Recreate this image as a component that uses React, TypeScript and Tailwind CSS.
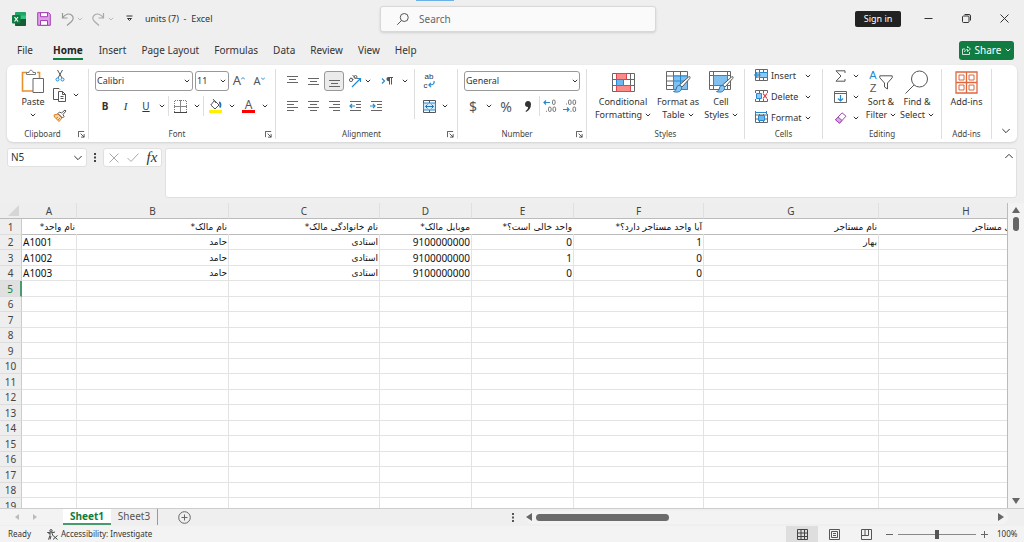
import React from "react"

type BtnProps = {
  label: string
  className?: string
  children?: React.ReactNode
}

const columns = [
  { name: "A", width: "w-[55px]" },
  { name: "B", width: "w-[152px]" },
  { name: "C", width: "w-[151px]" },
  { name: "D", width: "w-[92px]" },
  { name: "E", width: "w-[102px]" },
  { name: "F", width: "w-[130px]" },
  { name: "G", width: "w-[175px]" },
  { name: "H", width: "w-[175px]" },
]

const rows: string[][] = [
  [
    "نام واحد*",
    "نام مالک*",
    "نام خانوادگی مالک*",
    "موبایل مالک*",
    "واحد خالی است؟*",
    "آیا واحد مستاجر دارد؟*",
    "نام مستاجر",
    "نام خانوادگی مستاجر",
  ],
  ["A1001", "حامد", "استادی", "9100000000", "0", "1", "بهار", ""],
  ["A1002", "حامد", "استادی", "9100000000", "1", "0", "", ""],
  ["A1003", "حامد", "استادی", "9100000000", "0", "0", "", ""],
]

const rowNumbers = Array.from({ length: 19 }, (_, i) => i + 1)

const menuTabs = [
  "File",
  "Home",
  "Insert",
  "Page Layout",
  "Formulas",
  "Data",
  "Review",
  "View",
  "Help",
]

const Chevron = ({ className = "w-[6px] h-[6px]" }: { className?: string }) => (
  <svg viewBox="0 0 6 6" className={className} fill="none" stroke="currentColor">
    <path d="M.8 1.800L3 4l2.200-2.200" vectorEffect="non-scaling-stroke" />
  </svg>
)

const Btn = ({ label, className = "w-5", children }: BtnProps) => (
  <button
    aria-label={label}
    className={`h-5 shrink-0 flex items-center justify-center ${className}`}
  >
    {children}
  </button>
)

const Drop = ({ label }: { label: string }) => (
  <Btn label={label} className="w-3">
    <Chevron />
  </Btn>
)

const Sep = ({ className = "h-5" }: { className?: string }) => (
  <span className={`w-px shrink-0 bg-[#dedede] ${className}`} />
)

const Group = ({
  title,
  className,
  launcher,
  children,
}: {
  title: string
  className: string
  launcher?: boolean
  children: React.ReactNode
}) => (
  <section
    aria-label={title}
    className={`mt-1 mb-[3px] shrink-0 flex flex-col border-r border-[#dedede] ${className}`}
  >
    <div className="h-[60px]">{children}</div>
    <div className="flex h-[10px] items-center">
      <span className="flex-1 text-center text-[8px] leading-[10px] text-[#444]">
        {title}
      </span>
      {launcher && (
        <button aria-label={`${title} settings`} className="w-[10px]">
          <svg viewBox="0 0 8 8" className="size-[7px]" fill="none" stroke="#444">
            <path d="M.5 7V.5H7M3 3l4 4M7 3.5V7H3.5" />
          </svg>
        </button>
      )}
    </div>
  </section>
)

const Lines = ({ d, arrow }: { d: string; arrow?: string }) => (
  <svg viewBox="0 0 13 13" className="size-[13px]" fill="none">
    <path d={d} stroke="#666" />
    {arrow && <path d={arrow} stroke="#2589d0" strokeWidth="1.2" />}
  </svg>
)

const PasteIcon = () => (
  <svg viewBox="0 0 24 25" className="w-6 h-[25px]" fill="none">
    <path d="M6 3.500H1.500v18.500H12M16 3.500h2.500V9" stroke="#e8912d" strokeWidth="1.600" />
    <path d="M5.500 5.500v-2h2.500c0-3 4-3 4 0h2.500v2z" fill="#fff" stroke="#777" />
    <path d="M12 9.500h10.500v14H12z" fill="#fff" stroke="#666" />
  </svg>
)

const CutIcon = () => (
  <svg viewBox="0 0 10 13" className="w-[10px] h-[13px]" fill="none">
    <path d="M2.500 1l4.500 8M7.500 1L3 9" stroke="#555" />
    <circle cx="2.500" cy="10.500" r="1.500" stroke="#2589d0" />
    <circle cx="7.500" cy="10.500" r="1.500" stroke="#2589d0" />
  </svg>
)

const CopyIcon = () => (
  <svg viewBox="0 0 14 14" className="size-[14px]" fill="none" stroke="#555">
    <path d="M5 11.500H.5v-11H6L7 1.500" />
    <path d="M5.500 3.500h4l3 3v7h-7zM9.500 3.500v3h3M7.500 8.500h3M7.500 10.500h3" fill="#fff" />
  </svg>
)

const BrushIcon = () => (
  <svg viewBox="0 0 14 13" className="w-[14px] h-[13px]" fill="none">
    <path d="M1 6l4-1 4 4-3 3.500L1.500 8z" fill="#fbd8a8" stroke="#e07b1b" />
    <path d="M3 9.500l2-1.500M5 11l2-2" stroke="#e07b1b" />
    <path d="M5 4.500l1.500-1.500 2 1L12 1l1 1-3 3.500 1 2L9.500 9z" fill="#fff" stroke="#555" />
  </svg>
)

const BordersIcon = () => (
  <svg viewBox="0 0 13 13" className="size-[13px]" fill="none" stroke="#777">
    <path d="M.5 12V.5h12V12" strokeDasharray="1 1" />
    <path d="M6.500 0v13M0 6.500h13" stroke="#888" />
    <path d="M0 12.500h13" stroke="#444" />
  </svg>
)

const FillIcon = () => (
  <svg viewBox="0 0 13 14" className="w-[13px] h-[14px]" fill="none">
    <path d="M5.500 1.500L10 6 6 10 1.800 6zM4 0l3 4" stroke="#555" />
    <path d="M10 3.500c1.500 0 2 2 1 5" stroke="#1d6fb8" strokeWidth="1.800" />
    <path d="M0 11h13v3H0z" fill="#fff200" />
  </svg>
)

const FontColorIcon = () => (
  <span className="flex w-[13px] flex-col items-center text-[12px] leading-[11px] text-[#555]">
    A
    <span className="h-[3px] w-full bg-[#f00]" />
  </span>
)

const OrientationIcon = () => (
  <svg viewBox="0 0 14 14" className="size-[14px]" fill="none">
    <g stroke="#555" strokeWidth=".9">
      <circle cx="3" cy="6" r="1.600" />
      <path d="M3 3.500l2.500 2.500M4.500 1l4 4" />
      <circle cx="7.500" cy="3" r="1.500" />
    </g>
    <path d="M4 13l8.500-8.500M9 4.500h3.500V8" stroke="#2589d0" strokeWidth="1.200" />
  </svg>
)

const ParagraphIcon = () => (
  <svg viewBox="0 0 12 10" className="w-3 h-[10px]" fill="none">
    <path d="M1 2.500L3.500 5 1 7.500" stroke="#2589d0" strokeWidth="1.200" />
    <path d="M8.500 1.500v7M10.500 1.500v7M7.500 1.500H12" stroke="#555" />
    <path d="M8.500 1H7.500a2 2 0 000 4.200h1z" fill="#555" />
  </svg>
)

const WrapIcon = () => (
  <span className="flex flex-col font-['Liberation_Sans'] text-[8px] leading-[9px] text-[#333]">
    ab
    <span className="flex">
      c
      <svg viewBox="0 0 7 7" className="size-[7px]" fill="none" stroke="#2589d0" strokeWidth="1.200">
        <path d="M6 0c.6 3-1 4-5 4M3 1.800L.8 4 3 6.200" />
      </svg>
    </span>
  </span>
)

const MergeIcon = () => (
  <svg viewBox="0 0 13 13" className="size-[13px]" fill="none">
    <path d="M.5.5h12v12H.5zM6.500 0v3M6.500 10v3" stroke="#555" />
    <path d="M.5 3h12v7H.5z" fill="#d3e9fa" stroke="#2589d0" />
    <path d="M2.500 6.500h8M4.500 4.500l-2 2 2 2M8.500 4.500l2 2-2 2" stroke="#1d76ba" />
  </svg>
)

const DecimalIcon = ({ increase }: { increase?: boolean }) => (
  <svg viewBox="0 0 14 14" className="size-[14px]" fill="none">
    <g stroke="#666" strokeWidth=".9">
      {increase ? (
        <rect x="9.500" y="1" width="2.600" height="4.500" rx="1.300" />
      ) : (
        <>
          <rect x="5.500" y="1" width="2.600" height="4.500" rx="1.300" />
          <rect x="10" y="1" width="2.600" height="4.500" rx="1.300" />
          <path d="M3.500 4.500v1" />
        </>
      )}
      {increase && <rect x="5.500" y="8" width="2.600" height="4.500" rx="1.300" />}
      <rect x="10" y="8" width="2.600" height="4.500" rx="1.300" />
      <path d={increase ? "M3.500 11.800v1" : "M8 11.800v1"} />
    </g>
    <path
      d={increase ? "M7 3.500H1M3 1.500l-2 2 2 2" : "M0 10.500h6M4 8.500l2 2-2 2"}
      stroke="#2589d0"
      strokeWidth="1.200"
    />
  </svg>
)

const ConditionalIcon = () => (
  <svg viewBox="0 0 23 19" className="w-[23px] h-[19px]" fill="none">
    <path d="M.5.5h22v18H.5zM.5 6.500h22M.5 12.500h22M4.500.5v18M18.500.5v18" stroke="#666" />
    <path d="M4.500.5h10v6h-10zM4.500 12.500h14v6h-14z" fill="#f98b8b" stroke="#e0444b" />
    <path d="M4.500 6.500h7v6h-7z" fill="#6fb7ec" stroke="#2589d0" />
  </svg>
)

const TableStyleIcon = ({ single }: { single?: boolean }) => (
  <svg viewBox="0 0 25 22" className="w-[25px] h-[22px]" fill="none">
    <path
      d={
        single
          ? "M.5.5h21v18H.5zM4.500.5v18M18.500.5v18M.5 4.500h21M.5 14.500h21"
          : "M.5.5h21v18H.5zM7.500.5v18M14.500.5v18M.5 5h21M.5 10h21M.5 14.500h21"
      }
      stroke="#666"
    />
    {single ? (
      <path d="M4.500 4.500h14v10h-14z" fill="#80c0f0" stroke="#2589d0" />
    ) : (
      <path d="M7.500 5h14v13.500h-14zM14.500 5v13M7.500 10h14" fill="#80c0f0" stroke="#2589d0" />
    )}
    <path d="M22.500 6c1.500-1 2 0 1.200 1.500L16 16l-2.500-2z" fill="#fff" stroke="#555" />
    <path d="M13 14.500c2 0 3.500 2 2 4.500-1.500 2.500-5 2.500-7.500 1.500 2-.5 2.500-1.500 3-3.500.3-1.500 1-2.500 2.500-2.500z" fill="#8cc4f0" stroke="#1d76ba" />
  </svg>
)

const CellsIcon = ({ kind }: { kind: string }) => (
  <svg viewBox="0 0 14 13" className="w-[14px] h-[13px]" fill="none">
    <path d="M1.500.5h12v11h-12zM1.500 4h12M1.500 8h12M5.500.5v11M9.500.5v11" stroke="#666" />
    {kind === "Insert" && (
      <>
        <path d="M5.500 3.500h8v5h-8z" fill="#8cc8f5" stroke="#2589d0" />
        <path d="M6.500 6H.8M3 3.500L.8 6 3 8.500" stroke="#2589d0" strokeWidth="1.300" />
      </>
    )}
    {kind === "Delete" && (
      <>
        <path d="M0 3h14v6H0z" fill="#fff" />
        <path d="M2.500 3.500h5v5h-5z" fill="#8cc8f5" stroke="#2589d0" />
        <path d="M9 3.500l4 5M13 3.500l-4 5" stroke="#e0343c" strokeWidth="1.200" />
      </>
    )}
    {kind === "Format" && (
      <>
        <path d="M1 0h13v3H1z" fill="#fff" />
        <path d="M1.500 0v3M12.500 0v3M2 1.500h10" stroke="#2589d0" />
        <path d="M4.500 4.500h6v5h-6z" fill="#6fb7ec" stroke="#2589d0" />
      </>
    )}
  </svg>
)

const FillDownIcon = () => (
  <svg viewBox="0 0 13 12" className="w-[13px] h-3" fill="none">
    <path d="M.5.5h12v11H.5zM.5 2.500h12" stroke="#666" />
    <path d="M6.500 4v6M4 7.500L6.500 10 9 7.500" stroke="#2589d0" strokeWidth="1.200" />
  </svg>
)

const EraserIcon = () => (
  <svg viewBox="0 0 13 12" className="w-[13px] h-3" fill="none" stroke="#9b4bab">
    <path d="M8 .8l4 3.400-6.500 7-4-3.400z" fill="#fff" />
    <path d="M4 5l4 3.400-2.500 2.800-4-3.400z" fill="#dca6e4" />
  </svg>
)

const SortIcon = () => (
  <span className="flex items-center gap-[2px]">
    <span className="flex flex-col font-['Liberation_Sans'] text-[11px] leading-[13px] text-[#555]">
      <span className="text-[#2589d0]">A</span>
      <span>Z</span>
    </span>
    <svg viewBox="0 0 14 15" className="w-[14px] h-[15px]" fill="none" stroke="#555">
      <path d="M.8.8h12.400v2L8.500 8v6l-3-2V8L.8 2.800z" />
    </svg>
  </span>
)

const SearchIcon = ({ className }: { className: string }) => (
  <svg viewBox="0 0 24 24" className={className} fill="none" stroke="#555">
    <circle cx="14.500" cy="9" r="8" vectorEffect="non-scaling-stroke" />
    <path d="M9 15l-8.500 8.500" vectorEffect="non-scaling-stroke" />
  </svg>
)

const AddinsIcon = () => (
  <svg viewBox="0 0 23 23" className="size-[23px]" fill="none" stroke="#e0673c">
    <path d="M1 1h21v21H1zM11.500 1v21M1 11.500h21" strokeWidth="1.300" />
    <path d="M4 4h5v5H4zM14 4h5v5h-5zM4 14h5v5H4zM14 14h5v5h-5z" />
  </svg>
)

const BigBtn = ({
  top,
  bottom,
  className,
  children,
}: {
  top: string
  bottom?: string
  className: string
  children: React.ReactNode
}) => (
  <button
    className={`flex flex-col items-center whitespace-nowrap text-[9px] leading-[13px] ${className}`}
  >
    <span className="flex h-[26px] items-center">{children}</span>
    <span>{top}</span>
    {bottom && (
      <span className="flex items-center gap-[3px]">
        {bottom}
        <Chevron />
      </span>
    )}
  </button>
)

const TitleBar = () => (
  <header className="relative flex h-[37px] shrink-0 items-center pl-3">
    <div className="flex flex-1 items-center">
      <svg viewBox="0 0 14 14" className="size-[14px]">
        <path d="M4 0h9a1 1 0 011 1v12a1 1 0 01-1 1H4a1 1 0 01-1-1V1a1 1 0 011-1z" fill="#21a366" />
        <path d="M3 7h11v6a1 1 0 01-1 1H4a1 1 0 01-1-1z" fill="#185c37" />
        <path d="M8.500 3.500H14V7H8.500z" fill="#33c481" />
        <rect y="3" width="8.500" height="8.500" rx="1" fill="#107c41" />
        <path d="M2.500 5l3.500 4.500M6 5L2.500 9.500" stroke="#fff" strokeWidth="1.200" />
      </svg>
      <Btn label="Save" className="ml-2 w-5">
        <svg viewBox="0 0 14 14" className="size-[14px]" fill="#df9fe6" stroke="#a63db5">
          <path d="M.7.7h11l1.600 1.600v11H.7z" />
          <path d="M3.500.7h7v4h-7zM3.500 8.500h7v4.800h-7z" fill="#fff" />
        </svg>
      </Btn>
      <Btn label="Undo" className="ml-1 w-5">
        <svg viewBox="0 0 14 14" className="size-[14px]" fill="none" stroke="#999" strokeWidth="1.200">
          <path d="M1.500 1v5h5M1.500 6C4 2 8 1 10.500 3s2 4.500 0 6.500L6 13.500" />
        </svg>
      </Btn>
      <span className="-ml-1 text-[#bbb]"><Drop label="Undo history" /></span>
      <Btn label="Redo" className="ml-1 w-4">
        <svg viewBox="0 0 14 14" className="size-[14px]" fill="none" stroke="#aaa" strokeWidth="1.200">
          <path d="M12.500 1v5h-5M12.500 6C10 2 6 1 3.500 3s-2 4.500 0 6.500L8 13.500" />
        </svg>
      </Btn>
      <span className="-ml-px text-[#bbb]"><Drop label="Redo history" /></span>
      <Btn label="Customize toolbar" className="ml-1 w-4">
        <svg viewBox="0 0 7 7" className="size-[7px]" fill="none" stroke="#333">
          <path d="M.5 1h6M1.500 3.500l2 2 2-2z" />
        </svg>
      </Btn>
      <h1 className="ml-2 text-[9px] whitespace-pre text-[#333]">units (7)  -  Excel</h1>
    </div>
    <label className="mt-px flex h-[26px] w-[276px] items-center gap-2 rounded-[3px] border border-[#d8d8d8] bg-[#fafafa] px-4 shadow-sm">
      <SearchIcon className="size-3" />
      <input
        aria-label="Search"
        placeholder="Search"
        className="min-w-0 flex-1 pl-[2px] text-[10px] outline-none placeholder:text-[#666]"
      />
    </label>
    <span className="absolute top-0 left-[416px] h-px w-[38px] bg-[#6cb1e6]" />
    <div className="flex flex-1 items-center justify-end">
      <button className="h-4 w-[46px] rounded-[2px] bg-[#222] text-[9px] text-white">Sign in</button>
      <Btn label="Minimize" className="ml-2 w-[38px]">
        <svg viewBox="0 0 9 9" className="size-[9px]" stroke="#333"><path d="M.5 4.500h8" /></svg>
      </Btn>
      <Btn label="Restore" className="w-[38px]">
        <svg viewBox="0 0 9 9" className="size-[9px]" fill="none" stroke="#333">
          <rect x=".5" y="2" width="6.500" height="6.500" rx="1" />
          <path d="M2.500.5H7A1.500 1.500 0 018.500 2v4.500" />
        </svg>
      </Btn>
      <Btn label="Close" className="mr-px w-[38px]">
        <svg viewBox="0 0 9 9" className="size-[9px]" stroke="#333"><path d="M.5.5l8 8M8.500.5l-8 8" /></svg>
      </Btn>
    </div>
  </header>
)

const MenuBar = () => (
  <nav className="flex h-7 shrink-0 items-center gap-[15px] pr-[10px] pb-[2px] pl-[17px] text-[10px] text-[#333]">
    {menuTabs.map((tab) => (
      <a
        key={tab}
        href="#"
        className={
          tab === "Home"
            ? "mt-[2px] mr-px ml-[5px] border-b-2 border-[#107c41] font-bold leading-4 text-[#222]"
            : "leading-4"
        }
      >
        {tab}
      </a>
    ))}
    <button className="ml-auto flex h-[19px] w-[55px] items-center justify-center gap-1 rounded-[3px] bg-[#107c41] text-white">
      <svg viewBox="0 0 9 9" className="size-[9px]" fill="none" stroke="#fff">
        <path d="M3 3H.5v5.500h7V6M2.500 6C3 4 4 3.500 5.500 3.500V5.500L8.500 3 5.500.5V2" strokeWidth=".8" />
      </svg>
      Share
      <Chevron />
    </button>
  </nav>
)

const Ribbon = () => (
  <div className="mx-[7px] flex h-[77px] shrink-0 rounded-md bg-white text-[#333] shadow">
    <Group title="Clipboard" className="w-[82px]" launcher>
      <div className="flex">
        <button className="ml-3 flex w-7 flex-col items-center text-[9px] leading-[13px]">
          <PasteIcon />
          <span className="mt-px mb-1">Paste</span>
          <Chevron />
        </button>
        <div className="ml-[3px]">
          <Btn label="Cut" className="-mt-1 w-5"><CutIcon /></Btn>
          <div className="flex">
            <Btn label="Copy"><CopyIcon /></Btn>
            <Drop label="Copy options" />
          </div>
          <Btn label="Format painter"><BrushIcon /></Btn>
        </div>
      </div>
    </Group>

    <Group title="Font" className="w-[187px]" launcher>
      <div className="flex items-center pt-[2px] pl-[6px]">
        <label className="flex h-5 w-[98px] items-center rounded-[3px] border border-[#999] pr-[2px] pl-px">
          <select aria-label="Font name" className="h-full min-w-0 flex-1 appearance-none text-[9px] outline-none">
            <option>Calibri</option>
          </select>
          <Chevron />
        </label>
        <label className="ml-[2px] flex h-5 w-[34px] items-center rounded-[3px] border border-[#999] pr-[2px] pl-px">
          <select aria-label="Font size" className="h-full min-w-0 flex-1 appearance-none text-[9px] outline-none">
            <option>11</option>
          </select>
          <Chevron />
        </label>
        <Btn label="Increase font size">
          <span className="text-[13px] text-[#555]">A</span>
          <svg viewBox="0 0 4 8" className="h-2 w-1" fill="none" stroke="#2589d0"><path d="M0 2.500L2 .5l2 2" /></svg>
        </Btn>
        <Btn label="Decrease font size">
          <span className="text-[11px] text-[#555]">A</span>
          <svg viewBox="0 0 4 8" className="h-2 w-1" fill="none" stroke="#2589d0"><path d="M0 .5l2 2 2-2" /></svg>
        </Btn>
      </div>
      <div className="flex items-center pt-[5px] pl-[6px]">
        <Btn label="Bold" className="w-5 text-[10px] font-bold">B</Btn>
        <Btn label="Italic" className="w-[21px] font-['Liberation_Serif'] text-[11px] italic">I</Btn>
        <Btn label="Underline" className="w-5 text-[10px] underline">U</Btn>
        <Drop label="Underline options" />
        <Sep />
        <Btn label="Borders" className="w-[22px]"><BordersIcon /></Btn>
        <Drop label="Border options" />
        <Sep />
        <Btn label="Fill color" className="w-[22px]"><FillIcon /></Btn>
        <Drop label="Fill options" />
        <Btn label="Font color" className="w-[21px]"><FontColorIcon /></Btn>
        <Drop label="Font color options" />
      </div>
    </Group>

    <Group title="Alignment" className="w-[182px]" launcher>
      <div className="flex">
        <div className="w-[138px] pl-[6px]">
          <div className="flex items-center pt-[2px]">
            <Btn label="Top align" className="w-[21px]"><Lines d="M1 1.500h11M3 4.500h7M1 7.500h11" /></Btn>
            <Btn label="Middle align" className="w-[21px]"><Lines d="M1 3.500h11M3 6.500h7M1 9.500h11" /></Btn>
            <Btn label="Bottom align" className="w-5 rounded-[3px] border border-[#999] bg-[#ebebeb]">
              <Lines d="M1 5.500h11M3 8.500h7M1 11.500h11" />
            </Btn>
            <Btn label="Orientation" className="w-[21px]"><OrientationIcon /></Btn>
            <Chevron />
            <Btn label="Text direction" className="ml-1 w-6"><ParagraphIcon /></Btn>
            <Drop label="Direction options" />
          </div>
          <div className="flex items-center pt-[5px]">
            <Btn label="Align left" className="w-[21px]"><Lines d="M1 1.500h11M1 4.500h7M1 7.500h11M1 10.500h7" /></Btn>
            <Btn label="Center" className="w-[21px]"><Lines d="M1 1.500h11M3 4.500h7M1 7.500h11M3 10.500h7" /></Btn>
            <Btn label="Align right" className="w-[21px]"><Lines d="M1 1.500h11M5 4.500h7M1 7.500h11M5 10.500h7" /></Btn>
            <Btn label="Decrease indent" className="w-[21px]">
              <Lines d="M1 1.500h11M7 4.500h5M7 7.500h5M1 10.500h11" arrow="M6 6H.8M3 4L1 6l2 2" />
            </Btn>
            <Btn label="Increase indent" className="w-[21px]">
              <Lines d="M1 1.500h11M7 4.500h5M7 7.500h5M1 10.500h11" arrow="M0 6h5.200M3 4l2 2-2 2" />
            </Btn>
          </div>
        </div>
        <Sep className="h-[50px]" />
        <div className="pt-[2px] pl-1">
          <Btn label="Wrap text"><WrapIcon /></Btn>
          <div className="flex pt-[5px]">
            <Btn label="Merge and center"><MergeIcon /></Btn>
            <Drop label="Merge options" />
          </div>
        </div>
      </div>
    </Group>

    <Group title="Number" className="w-[129px]" launcher>
      <div className="px-[6px] pt-[2px]">
        <label className="flex h-5 items-center rounded-[3px] border border-[#999] pr-px pl-px">
          <select aria-label="Number format" className="h-full min-w-0 flex-1 appearance-none text-[9px] outline-none">
            <option>General</option>
          </select>
          <Chevron />
        </label>
      </div>
      <div className="flex items-center pt-[5px] pl-[5px]">
        <Btn label="Currency" className="w-5 text-[14px] text-[#555]">$</Btn>
        <Drop label="Currency options" />
        <Btn label="Percent" className="w-[22px] text-[14px] text-[#555]">%</Btn>
        <Btn label="Comma style" className="w-[22px]">
          <svg viewBox="0 0 6 11" className="w-[6px] h-[11px]" fill="#333">
            <path d="M3 0c2 0 3 1.300 3 3.200C6 7 4 9.600 1 11L.5 10c1.700-1 2.500-2.300 2.600-4C1.300 6.200 0 5 0 3.200 0 1.300 1.200 0 3 0z" />
          </svg>
        </Btn>
        <Sep />
        <Btn label="Increase decimal"><DecimalIcon increase /></Btn>
        <Btn label="Decrease decimal"><DecimalIcon /></Btn>
      </div>
    </Group>

    <Group title="Styles" className="w-[158px]">
      <div className="flex pl-1">
        <BigBtn top="Conditional" bottom="Formatting" className="w-[64px]"><ConditionalIcon /></BigBtn>
        <BigBtn top="Format as" bottom="Table" className="w-[46px]"><TableStyleIcon /></BigBtn>
        <BigBtn top="Cell" bottom="Styles" className="w-[40px]"><TableStyleIcon single /></BigBtn>
      </div>
    </Group>

    <Group title="Cells" className="w-[78px]">
      <div className="-mt-1 pl-[9px]">
        {["Insert", "Delete", "Format"].map((kind) => (
          <button key={kind} className="flex h-[21px] items-center gap-[3px] text-[9px]">
            <CellsIcon kind={kind} />
            <span className="w-[31px] text-left">{kind}</span>
            <Chevron />
          </button>
        ))}
      </div>
    </Group>

    <Group title="Editing" className="w-[119px]">
      <div className="flex">
        <div className="-mt-1 w-10 pl-[7px]">
          <div className="flex h-[21px] items-center">
            <Btn label="AutoSum">
              <svg viewBox="0 0 11 12" className="w-[11px] h-3" fill="none" stroke="#555">
                <path d="M10 3V.8H1L6 6l-5 5.200h9V9" />
              </svg>
            </Btn>
            <Drop label="Sum options" />
          </div>
          <div className="flex h-[21px] items-center">
            <Btn label="Fill"><FillDownIcon /></Btn>
            <Drop label="Fill direction" />
          </div>
          <div className="flex h-[21px] items-center">
            <Btn label="Clear"><EraserIcon /></Btn>
            <Drop label="Clear options" />
          </div>
        </div>
        <BigBtn top="Sort &" bottom="Filter" className="w-[36px]"><SortIcon /></BigBtn>
        <BigBtn top="Find &" bottom="Select" className="w-[36px]"><SearchIcon className="size-6" /></BigBtn>
      </div>
    </Group>

    <Group title="Add-ins" className="w-[50px]">
      <BigBtn top="Add-ins" className="w-full"><AddinsIcon /></BigBtn>
    </Group>

    <button aria-label="Collapse ribbon" className="flex flex-1 items-end justify-center pb-[6px] pl-[3px]">
      <Chevron className="size-[10px]" />
    </button>
  </div>
)

const FormulaBar = () => (
  <div className="mx-[7px] mt-[6px] flex shrink-0 items-start text-[#333]">
    <label className="flex h-[19px] w-[80px] items-center rounded-[3px] border border-[#e0e0e0] bg-white px-[3px]">
      <input aria-label="Name box" defaultValue="N5" className="min-w-0 flex-1 text-[10px] outline-none" />
      <Chevron className="size-[10px]" />
    </label>
    <svg viewBox="0 0 2 9" className="mx-[7px] mt-[5px] h-[9px] w-[2px]" fill="#444">
      <path d="M0 0h2v2H0zM0 3.500h2v2H0zM0 7h2v2H0z" />
    </svg>
    <div className="mr-[3px] flex h-[19px] w-[59px] items-center rounded-[3px] border border-[#e0e0e0] bg-white">
      <Btn label="Cancel" className="w-[19px]">
        <svg viewBox="0 0 10 10" className="size-[10px]" stroke="#aaa"><path d="M.5.5l9 9M9.500.5l-9 9" /></svg>
      </Btn>
      <Btn label="Enter" className="w-[19px]">
        <svg viewBox="0 0 12 9" className="h-[9px] w-3" fill="none" stroke="#aaa"><path d="M.5 5l3.500 3.500L11.500.5" /></svg>
      </Btn>
      <Btn label="Insert function" className="w-5 font-['Liberation_Serif'] text-[15px] italic">fx</Btn>
    </div>
    <div className="flex h-[50px] flex-1 items-start rounded-[3px] border border-[#e0e0e0] bg-white">
      <textarea aria-label="Formula" className="h-full flex-1 resize-none outline-none" />
      <button aria-label="Collapse formula bar" className="p-[2px]">
        <Chevron className="size-[10px] rotate-180" />
      </button>
    </div>
  </div>
)

const isLatin = (value: string) => /^A?\d+$/.test(value)

const Sheet = () => (
  <div className="mt-[5px] flex min-h-0 flex-1">
    <div className="min-w-0 flex-1 overflow-hidden border-r border-[#bbb] bg-white">
      <table className="w-[1054px] table-fixed border-separate border-spacing-0 text-[#111]">
        <thead>
          <tr className="h-[16px] bg-[#eee] text-[#444]">
            <th className="w-[22px] border-b border-[#bbb] p-0">
              <svg viewBox="0 0 11 11" className="ml-2 size-[11px]" fill="#d6d6d6">
                <path d="M11 0v11H0z" />
              </svg>
            </th>
            {columns.map((col) => (
              <th
                key={col.name}
                className={`border-r border-b border-r-[#e0e0e0] border-b-[#bbb] p-0 text-[10px] leading-[14px] font-normal ${col.width}`}
              >
                {col.name}
              </th>
            ))}
          </tr>
        </thead>
        <tbody>
          {rowNumbers.map((n) => (
            <tr key={n} className="odd:h-[16px] even:h-[15px]">
              <th
                className={`border-b border-b-[#ddd] p-0 text-[10px] leading-[14px] font-normal ${
                  n === 5
                    ? "border-r-2 border-r-[#4a9a70] bg-[#e0e0e0] text-[#107c41]"
                    : "border-r border-r-[#ccc] bg-[#eee] text-[#444]"
                }`}
              >
                {n}
              </th>
              {columns.map((col, i) => {
                const value = rows[n - 1]?.[i] ?? ""
                return (
                  <td
                    key={col.name}
                    dir={isLatin(value) ? "ltr" : "rtl"}
                    className={`overflow-hidden border-r border-b px-px py-0 leading-[14px] whitespace-nowrap ${
                      isLatin(value)
                        ? "font-['Noto_Sans'] text-[10px]"
                        : "font-['DejaVu_Sans'] text-[9px]"
                    } ${value.startsWith("A") ? "text-left" : "text-right"} ${
                      n === 1 ? "border-r-transparent border-b-[#bbb]" : "border-[#e3e3e3]"
                    }`}
                  >
                    {value}
                  </td>
                )
              })}
            </tr>
          ))}
        </tbody>
      </table>
    </div>
    <div className="flex w-4 flex-col items-center bg-[#f3f3f3] py-1">
      <button aria-label="Scroll up">
        <svg viewBox="0 0 8 6" className="block h-[6px] w-2" fill="#666"><path d="M4 0l4 6H0z" /></svg>
      </button>
      <span className="mt-1 h-[14px] w-[6px] rounded-full bg-[#666]" />
      <button aria-label="Scroll down" className="mt-auto">
        <svg viewBox="0 0 8 6" className="block h-[6px] w-2" fill="#666"><path d="M0 0h8L4 6z" /></svg>
      </button>
    </div>
  </div>
)

const SheetTabs = () => (
  <div className="flex h-[18px] shrink-0 items-center border-t border-[#ccc] pr-4 pb-px text-[10px]">
    <div className="flex h-full w-[63px] items-center gap-[14px] bg-[#f3f3f3] pl-[15px]">
      <svg viewBox="0 0 4 6" className="h-[6px] w-1" fill="#bbb"><path d="M4 0v6L0 3z" /></svg>
      <svg viewBox="0 0 4 6" className="h-[6px] w-1" fill="#bbb"><path d="M0 0v6l4-3z" /></svg>
    </div>
    <button className="h-4 w-[48px] border-b-2 border-[#4a9a70] bg-white leading-[14px] font-bold text-[#107c41]">
      Sheet1
    </button>
    <button className="h-4 w-[47px] border-r border-[#999] pb-[2px] leading-[14px] text-[#555]">Sheet3</button>
    <button aria-label="New sheet" className="ml-5">
      <svg viewBox="0 0 13 13" className="block size-[13px]" fill="none" stroke="#666">
        <circle cx="6.500" cy="6.500" r="5.800" />
        <path d="M6.500 3.500v6M3.500 6.500h6" />
      </svg>
    </button>
    <div className="ml-auto flex h-full w-[496px] items-center">
      <svg viewBox="0 0 2 9" className="mr-[12px] h-[9px] w-[2px]" fill="#555">
        <path d="M0 0h2v2H0zM0 3.500h2v2H0zM0 7h2v2H0z" />
      </svg>
      <div className="flex h-[13px] flex-1 items-center rounded-full bg-[#f3f3f3] pr-1">
        <svg viewBox="0 0 6 8" className="h-2 w-[6px]" fill="#666"><path d="M6 0v8L0 4z" /></svg>
        <span className="ml-1 h-[7px] w-[133px] rounded-full bg-[#6b6b6b]" />
        <svg viewBox="0 0 6 8" className="ml-auto h-2 w-[6px]" fill="#666"><path d="M0 0v8l6-4z" /></svg>
      </div>
    </div>
  </div>
)

const StatusBar = () => (
  <footer className="flex h-4 shrink-0 items-center bg-[#f3f3f3] pr-[6px] pl-2 text-[8px] text-[#333]">
    <span>Ready</span>
    <button className="ml-4 flex items-center gap-[3px]">
      <svg viewBox="0 0 11 11" className="size-[11px]" fill="none" stroke="#444">
        <circle cx="4" cy="1.800" r="1.200" />
        <path d="M.5 3.500L3 4.500v2L1.500 10.500M.5 3.500L4 4l4-1M5.500 4.500v2M4 7l-1 3.500M6 6.500l4.500 4M10.500 6.500l-4.500 4" />
      </svg>
      Accessibility: Investigate
    </button>
    <div className="ml-auto flex items-center">
      <button aria-label="Normal view" className="flex h-4 w-8 items-center justify-center bg-[#dedede]">
        <svg viewBox="0 0 11 11" className="size-[11px]" fill="none" stroke="#444">
          <path d="M.5.5h10v10H.5zM4 .5v10M7.500.5v10M.5 4h10M.5 7.500h10" />
        </svg>
      </button>
      <button aria-label="Page layout view" className="flex w-8 justify-center">
        <svg viewBox="0 0 11 11" className="size-[11px]" fill="none" stroke="#555">
          <path d="M.5.5h10v10H.5zM2.500 2.500h6v6h-6zM4 4.500h3M4 6.500h3" />
        </svg>
      </button>
      <button aria-label="Page break view" className="flex w-8 justify-center">
        <svg viewBox="0 0 11 11" className="size-[11px]" fill="none" stroke="#555">
          <path d="M.5.5h10v10H.5zM.5 6.500h7v-6M4 .5v6" />
        </svg>
      </button>
      <button aria-label="Zoom out" className="ml-1">
        <svg viewBox="0 0 7 7" className="block size-[7px]" stroke="#666"><path d="M0 3.500h7" /></svg>
      </button>
      <input
        type="range"
        aria-label="Zoom"
        defaultValue={50}
        className="mx-[5px] h-[10px] w-[78px] appearance-none bg-[linear-gradient(#888,#888)] bg-[length:100%_1px] bg-center bg-no-repeat [&::-webkit-slider-thumb]:h-[9px] [&::-webkit-slider-thumb]:w-1 [&::-webkit-slider-thumb]:appearance-none [&::-webkit-slider-thumb]:bg-[#555]"
      />
      <button aria-label="Zoom in">
        <svg viewBox="0 0 7 7" className="block size-[7px]" stroke="#666"><path d="M0 3.500h7M3.500 0v7" /></svg>
      </button>
      <span className="ml-[9px] w-[21px]">100%</span>
    </div>
  </footer>
)

const App = () => {
  return (
    <main className="flex h-screen flex-col overflow-hidden bg-[#efefef] font-['Noto_Sans','Open_Sans',sans-serif]">
      <TitleBar />
      <MenuBar />
      <Ribbon />
      <FormulaBar />
      <Sheet />
      <SheetTabs />
      <StatusBar />
    </main>
  )
}

export default App
